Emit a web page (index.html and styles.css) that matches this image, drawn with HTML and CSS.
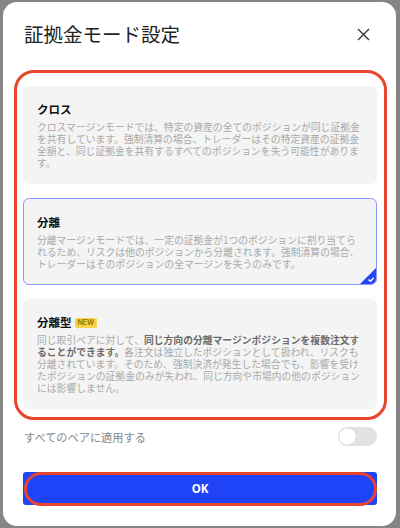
FILE: index.html
```html
<!DOCTYPE html>
<html lang="ja">
<head>
  <meta charset="utf-8" />
  <title>証拠金モード設定</title>
  <link rel="stylesheet" href="styles.css">
</head>
<body>

<div class="modal">
  <div class="modal-header">
    <h2 class="modal-title">証拠金モード設定</h2>
    <span class="close">
      <svg width="13" height="13" viewBox="0 0 13 13"><path d="M1 1 L12 12 M12 1 L1 12" stroke="#333" stroke-width="1.3" fill="none"/></svg>
    </span>
  </div>

  <div class="mode-list">
    <div class="mode">
      <div class="mode-name">クロス</div>
      <div class="mode-desc">クロスマージンモードでは、特定の資産の全てのポジションが同じ証拠金<br>を共有しています。強制清算の場合、トレーダーはその特定資産の証拠金<br>全額と、同じ証拠金を共有するすべてのポジションを失う可能性がありま<br>す。</div>
    </div>

    <div class="mode selected">
      <div class="mode-name">分離</div>
      <div class="mode-desc">分離マージンモードでは、一定の証拠金が1つのポジションに割り当てら<br>れるため、リスクは他のポジションから分離されます。強制清算の場合、<br>トレーダーはそのポジションの全マージンを失うのみです。</div>
      <span class="check">
        <svg width="16" height="16" viewBox="0 0 16 16"><path d="M16 0 L16 16 L0 16 Z" fill="#2446f2"/><path d="M8.5 11.5 L10.5 13.3 L13.8 9.6" stroke="#fff" stroke-width="1.4" fill="none"/></svg>
      </span>
    </div>

    <div class="mode">
      <div class="mode-name">分離型 <span class="badge">NEW</span></div>
      <div class="mode-desc">同じ取引ペアに対して、<b>同じ方向の分離マージンポジションを複数注文す<br>ることができます。</b>各注文は独立したポジションとして扱われ、リスクも<br>分離されています。そのため、強制決済が発生した場合でも、影響を受け<br>たポジションの証拠金のみが失われ、同じ方向や市場内の他のポジション<br>には影響しません。</div>
    </div>
  </div>

  <div class="apply-row">
    <span class="apply-label">すべてのペアに適用する</span>
    <span class="toggle"><span class="knob"></span></span>
  </div>

  <button class="ok-btn">OK</button>
</div>

</body>
</html>
```

FILE: styles.css
```css
html, body {
  margin: 0;
  padding: 0;
}

body {
  background-color: #858585;
  font-family: "Noto Sans CJK JP", "Noto Sans", sans-serif;
  width: 400px;
  height: 528px;
  overflow: hidden;
}

.modal {
  margin: 2px 4px 0 3px;
  height: 524px;
  box-sizing: border-box;
  background-color: #fff;
  border-radius: 14px;
  padding: 20px 19px 0 20px;
}

.modal-header {
  display: flex;
  align-items: center;
  justify-content: space-between;
  height: 24px;
  padding-left: 1px;
}

.modal-title {
  margin: 0;
  font-size: 19.5px;
  font-weight: 400;
  color: #222;
  line-height: 24px;
}

.close {
  display: flex;
  margin-right: 7px;
}

.mode-list {
  margin: 24px -10px 0 -9px;
  border: 3px solid #e8452c;
  border-radius: 20px;
  padding: 13px 7px 8px 6px;
  display: flex;
  flex-direction: column;
  gap: 14px;
}

.mode {
  position: relative;
  background-color: #f4f4f4;
  border-radius: 6px;
  padding: 16px 10px 15px 14px;
  overflow: hidden;
}

.mode.selected {
  border: 1px solid #8e95ff;
  padding: 16px 9px 14px 13px;
}

.mode-name {
  font-size: 11.5px;
  font-weight: 700;
  color: #111;
  line-height: 15px;
  display: flex;
  align-items: center;
  gap: 3px;
}

.badge {
  display: inline-block;
  background-color: #f7d54a;
  color: #a17800;
  font-family: "Inter", "Liberation Sans", sans-serif;
  font-size: 7px;
  font-weight: 700;
  line-height: 10px;
  padding: 0 3px;
  border-radius: 2px;
}

.mode-desc {
  margin-top: 4px;
  font-size: 9.8px;
  line-height: 12px;
  color: #a9a9a9;
  white-space: nowrap;
}

.mode-desc b {
  color: #6a6a6a;
}

.check {
  position: absolute;
  right: 0;
  bottom: 0;
  display: flex;
}

.apply-row {
  display: flex;
  align-items: center;
  justify-content: space-between;
  margin-top: 7px;
  padding-left: 1px;
  height: 19px;
}

.apply-label {
  font-size: 11.2px;
  color: #888;
}

.toggle {
  position: relative;
  width: 39px;
  height: 19px;
  border-radius: 10px;
  background-color: #e2e2e2;
}

.knob {
  position: absolute;
  left: 1px;
  top: 1px;
  width: 17px;
  height: 17px;
  border-radius: 50%;
  background-color: #fff;
  box-shadow: 0 0 1px rgba(0, 0, 0, 0.25);
}

.ok-btn {
  position: relative;
  display: block;
  width: 100%;
  height: 33px;
  margin-top: 26px;
  border: 0;
  border-radius: 3px;
  background-color: #1f44f7;
  color: #fff;
  font-family: "Noto Sans", sans-serif;
  font-size: 11.5px;
  font-weight: 700;
}

.ok-btn::after {
  content: "";
  position: absolute;
  left: 1px;
  top: 0;
  right: 0;
  bottom: -1px;
  border: 3px solid #e8452c;
  border-radius: 17px;
}
```
